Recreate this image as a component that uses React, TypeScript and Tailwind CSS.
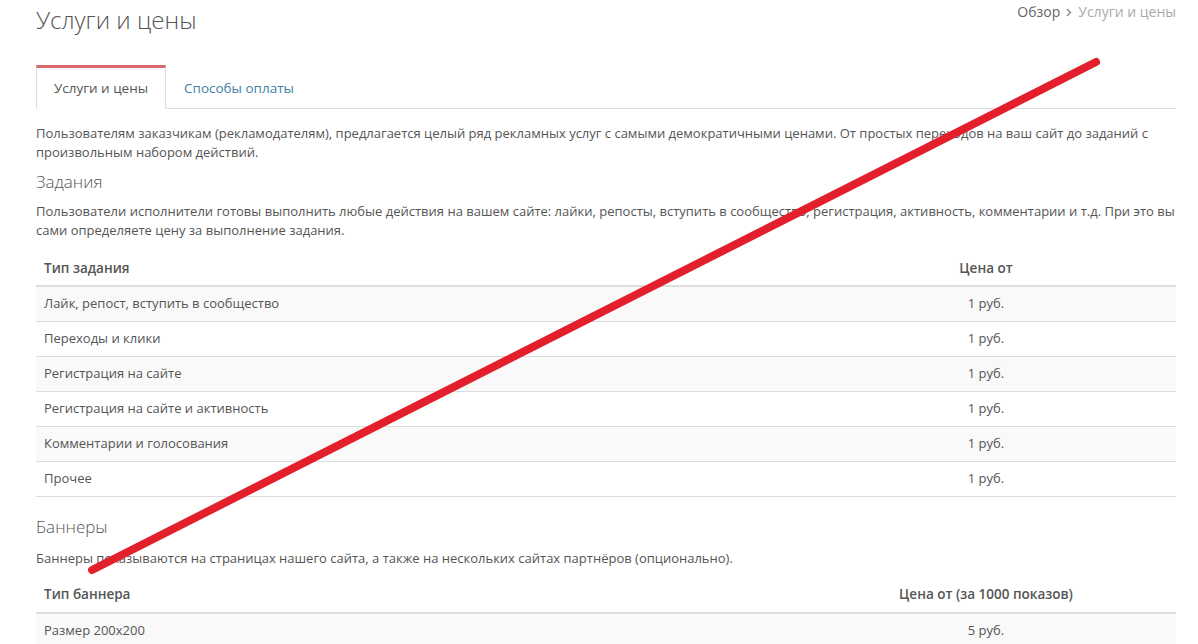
import React from "react";

const tasks = [
  "Лайк, репост, вступить в сообщество",
  "Переходы и клики",
  "Регистрация на сайте",
  "Регистрация на сайте и активность",
  "Комментарии и голосования",
  "Прочее",
];

export default function App() {
  return (
    <div
      className="relative w-[1198px] h-[644px] overflow-hidden bg-white text-[#555] text-[13px]"
      style={{ fontFamily: '"Open Sans", "Noto Sans", sans-serif' }}
    >
      <div className="ml-[36px] w-[1140px]">
        <div className="flex justify-between items-start">
          <h1 className="text-[24px] font-light text-[#555] leading-[32px] mt-[4px]">Услуги и цены</h1>
          <div className="flex items-center mt-[3px] text-[14px] leading-[18px]">
            <span className="text-[#666]">Обзор</span>
            <svg className="mx-[6px]" width="6" height="9" viewBox="0 0 6 9">
              <path d="M1 1l3.5 3.5L1 8" fill="none" stroke="#888" strokeWidth="1.4" />
            </svg>
            <span className="text-[#aaa]">Услуги и цены</span>
          </div>
        </div>

        <div className="mt-[29px] flex border-b border-[#ddd] h-[44px]">
          <div className="w-[130px] border-t-[3px] border-t-[#d66a6a] border-x border-x-[#ddd] bg-white -mb-px flex items-center justify-center text-[#555] text-[13.5px]">
            Услуги и цены
          </div>
          <div className="px-[18px] flex items-center text-[#3f7fa6] text-[13.5px] pt-[3px]">Способы оплаты</div>
        </div>

        <p className="mt-[15px] leading-[19px]">
          Пользователям заказчикам (рекламодателям), предлагается целый ряд рекламных услуг с самыми демократичными ценами. От простых переходов на ваш сайт до заданий с произвольным набором действий.
        </p>
        <h2 className="mt-[9px] text-[17px] font-light leading-[22px]">Задания</h2>
        <p className="mt-[9px] leading-[19px]">
          Пользователи исполнители готовы выполнить любые действия на вашем сайте: лайки, репосты, вступить в сообщество, регистрация, активность, комментарии и т.д. При это вы сами определяете цену за выполнение задания.
        </p>

        <table className="w-[1140px] mt-[11px] border-collapse">
          <thead>
            <tr className="h-[35px]">
              <th className="w-[760px] text-left font-semibold px-[8px] text-[13.5px] border-b-2 border-[#ddd]">Тип задания</th>
              <th className="text-center font-semibold px-[8px] text-[13.5px] border-b-2 border-[#ddd]">Цена от</th>
            </tr>
          </thead>
          <tbody>
            {tasks.map((t, i) => (
              <tr key={t} className={`h-[35px] border-b border-[#ddd] ${i % 2 === 0 ? "bg-[#f9f9f9]" : "bg-white"}`}>
                <td className="px-[8px]">{t}</td>
                <td className="px-[8px] text-center">1 руб.</td>
              </tr>
            ))}
          </tbody>
        </table>

        <h2 className="mt-[19px] text-[17px] font-light leading-[22px]">Баннеры</h2>
        <p className="mt-[11px] leading-[19px]">
          Баннеры показываются на страницах нашего сайта, а также на нескольких сайтах партнёров (опционально).
        </p>
        <table className="w-[1140px] mt-[10px] border-collapse">
          <thead>
            <tr className="h-[35px]">
              <th className="w-[760px] text-left font-semibold px-[8px] text-[13.5px] border-b-2 border-[#ddd]">Тип баннера</th>
              <th className="text-center font-semibold px-[8px] text-[13.5px] border-b-2 border-[#ddd]">Цена от (за 1000 показов)</th>
            </tr>
          </thead>
          <tbody>
            <tr className="h-[35px] border-b border-[#ddd] bg-[#f9f9f9]">
              <td className="px-[8px]">Размер 200x200</td>
              <td className="px-[8px] text-center">5 руб.</td>
            </tr>
          </tbody>
        </table>
      </div>

      <svg className="absolute inset-0 pointer-events-none" width="1198" height="644" viewBox="0 0 1198 644">
        <line x1="1096" y1="62" x2="92" y2="570" stroke="#e21f2b" strokeWidth="8" strokeLinecap="round" />
      </svg>
    </div>
  );
}
